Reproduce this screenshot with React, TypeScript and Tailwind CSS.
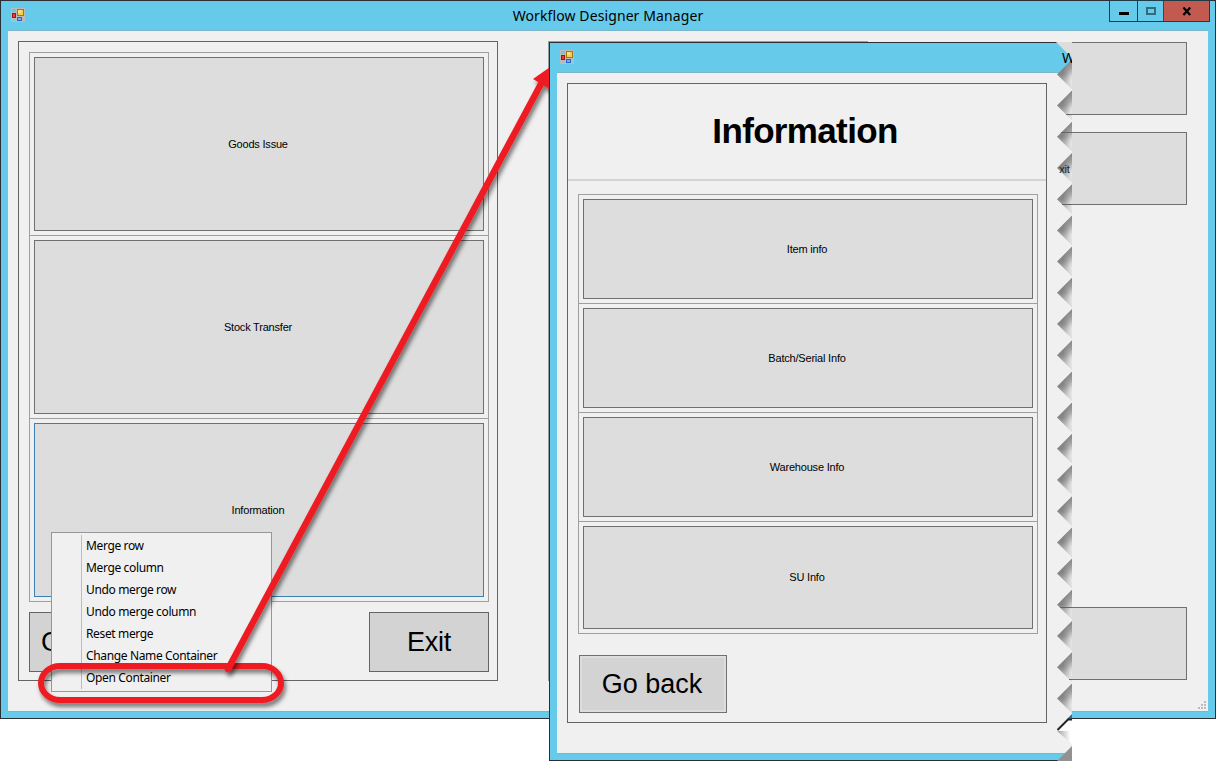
import React from "react";

const SANS = "font-['Noto_Sans','Open_Sans',sans-serif]";
const ARIAL = "font-['Liberation_Sans',Arial,sans-serif]";
const PITCH = 31.2;

function FormIcon() {
  return (
    <svg width="14" height="14" viewBox="0 0 14 14" shapeRendering="crispEdges">
      <rect width="14" height="14" fill="#bcbcbc" />
      <rect x="1" y="1" width="4" height="3" fill="#6cc4e6" />
      <rect x="1" y="11" width="1" height="2" fill="#8cc8e0" />
      <rect x="3" y="11" width="2" height="2" fill="#8cc8e0" />
      <rect x="12" y="9" width="1" height="4" fill="#8cc8e0" />
      <rect x="1" y="5" width="4" height="5" fill="#a31312" />
      <rect x="2" y="6" width="2" height="3" fill="#d8493c" />
      <rect x="6" y="1" width="7" height="7" fill="#a9760c" />
      <rect x="7" y="2" width="5" height="5" fill="#f9cd48" />
      <rect x="7" y="2" width="3" height="3" fill="#fde07c" />
      <rect x="6" y="9" width="5" height="4" fill="#2c62c4" />
      <rect x="7" y="10" width="3" height="2" fill="#7fa9ee" />
    </svg>
  );
}

function Tile({ label, className }: { label: string; className: string }) {
  return (
    <div className={`border-[#9f9f9f] p-1 ${className}`}>
      <div className={`flex h-full items-center justify-center border bg-[#dddddd] pr-[2px] ${label === "Information" ? "border-[#3c7fb1]" : "border-[#707070]"}`}>
        <span className={`${ARIAL} text-[11px] tracking-[-0.2px]`}>{label}</span>
      </div>
    </div>
  );
}

const menuItems = ["Merge row", "Merge column", "Undo merge row", "Undo merge column", "Reset merge", "Change Name Container", "Open Container"];

function ContextMenu() {
  return (
    <div className="absolute left-[51px] top-[532px] flex h-[160px] w-[221px] border border-[#979797] bg-[#f0f0f0] py-[2px]">
      <div className="w-[30px] border-r border-[#bdbdbd]" />
      <ul className={`${SANS} flex-1 pl-1 text-[12px] tracking-[-0.36px]`}>
        {menuItems.map((item) => (
          <li key={item} className="h-[22px] whitespace-nowrap leading-[22px]">{item}</li>
        ))}
      </ul>
    </div>
  );
}

function MainWindow() {
  return (
    <div className="flex h-[719px] w-[1216px] flex-col border border-[#2b2f33] bg-[#66caea] px-[7px] pb-[6px]">
      <header className="relative flex h-[29px] shrink-0 items-start justify-center">
        <div className="absolute left-[3px] top-[7px]"><FormIcon /></div>
        <h1 className={`${SANS} text-[14px] leading-[29px] tracking-[0.1px]`}>Workflow Designer Manager</h1>
        <div className="absolute -right-[2px] -top-px flex h-[22px] border border-[#1f3c46]">
          <div className="flex w-[28px] justify-center border-r border-[#1f3c46]"><div className="mt-[11px] h-[3px] w-[10px] bg-black" /></div>
          <div className="flex w-[25px] justify-center"><div className="mt-[6px] h-[8px] w-[10px] border-2 border-[#356b7c]" /></div>
          <div className="flex w-[46px] justify-center border-l border-[#6b3431] bg-[#c35a50]">
            <svg className="mt-[6px]" width="10" height="9" viewBox="0 0 10 9"><path d="M1.4 .5 8.2 8M8.2 .5 1.4 8" stroke="#000" strokeWidth="2.2" /></svg>
          </div>
        </div>
      </header>
      <main className="relative flex flex-1 justify-between border-y border-[#7fb4c8] bg-[#f0f0f0] pb-[30px] pl-[10px] pr-[21px] pt-[10px]">
        <section className="flex w-[480px] flex-col border border-[#646464] pb-2 pl-[10px] pr-[8px] pt-[10px]">
          <div className="flex flex-col">
            <Tile label="Goods Issue" className="h-[183px] border-x border-t" />
            <Tile label="Stock Transfer" className="h-[183px] border-x border-t" />
            <Tile label="Information" className="h-[184px] border" />
          </div>
          <div className={`${ARIAL} mt-[10px] flex h-[60px] justify-between text-[27px] tracking-[-0.3px]`}>
            <div className="flex w-[148px] items-center border border-[#646464] bg-[#d3d3d3] pl-[11px]">Go back</div>
            <div className="flex w-[120px] items-center justify-center border border-[#646464] bg-[#d3d3d3]">Exit</div>
          </div>
        </section>
        <section className="flex w-[639px] flex-col border-l border-[#9a9a9a] pb-px">
          <div className="h-px w-[319px] bg-[#9f9f9f]" />
          <div className="h-[73px] border border-[#707070] bg-[#dddddd]" />
          <div className="mt-[17px] h-[73px] border border-[#707070] bg-[#dddddd]" />
          <div className="mt-auto h-[73px] border border-[#707070] bg-[#dddddd]" />
        </section>
        <svg className="absolute bottom-[2px] right-[2px]" width="8" height="8" shapeRendering="crispEdges">
          {[[6, 0], [3, 3], [6, 3], [0, 6], [3, 6], [6, 6]].map(([x, y]) => <rect key={`${x}-${y}`} x={x} y={y} width="2" height="2" fill="#bcbcbc" />)}
        </svg>
      </main>
    </div>
  );
}

function InfoWindow() {
  return (
    <div className="absolute left-[549px] top-[42px] h-[719px] w-[523px] overflow-hidden">
      <div className="flex h-[719px] w-[640px] flex-col border border-[#2b2f33] bg-[#66caea] px-[7px] pb-[6px]">
        <header className="h-[29px] shrink-0 pl-[3px] pt-[7px]"><FormIcon /></header>
        <main className="flex-1 border-y border-[#7fb4c8] bg-[#f0f0f0] pl-[10px] pt-[10px]">
          <section className="flex h-[640px] w-[480px] flex-col border border-[#646464]">
            <h2 className={`${ARIAL} flex h-[97px] shrink-0 items-center justify-center border-b-2 border-[#d3d3d3] pr-[4px] text-[35px] font-bold tracking-[-0.65px]`}>Information</h2>
            <div className="ml-[10px] mr-[8px] mt-[13px] flex flex-col">
              <Tile label="Item info" className="h-[109px] border-x border-t" />
              <Tile label="Batch/Serial Info" className="h-[109px] border-x border-t" />
              <Tile label="Warehouse Info" className="h-[109px] border-x border-t" />
              <Tile label="SU Info" className="h-[113px] border" />
            </div>
            <div className={`${ARIAL} ml-[11px] mt-[21px] flex h-[58px] w-[148px] items-center justify-center border border-[#707070] bg-[#d3d3d3] pr-[2px] text-[27px] shadow-[inset_0_0_0_2px_#dddddd]`}>Go back</div>
          </section>
        </main>
      </div>
    </div>
  );
}

function TornEdge() {
  return (
    <svg className="absolute left-[1052px] top-[42px]" width="20" height="719" viewBox="1052 42 20 719">
      <defs>
        <radialGradient id="fold" cx="1.05" cy="0.74" r="0.72">
          <stop offset="0.1" stopColor="#ececec" />
          <stop offset="0.35" stopColor="#cccccc" />
          <stop offset="0.65" stopColor="#a0a0a0" />
          <stop offset="1" stopColor="#858585" />
        </radialGradient>
        <linearGradient id="lower" x1="0" y1="0" x2="0" y2="1">
          <stop offset="0.5" stopColor="#dddddd" stopOpacity="0" />
          <stop offset="1" stopColor="#e4e4e4" stopOpacity="0.9" />
        </linearGradient>
        <linearGradient id="last" x1="0" y1="0" x2="1" y2="0">
          <stop offset="0.1" stopColor="#aaaaaa" />
          <stop offset="0.9" stopColor="#ffffff" />
        </linearGradient>
      </defs>
      <path d="M1056 42H1072V58Z" fill="#dddddd" />
      {Array.from({ length: 21 }, (_, k) => {
        const y = 74.4 + k * PITCH;
        const d = `M1057 ${y}L1072 ${y - 15}V${y + 14.5}Z`;
        return (
          <g key={k}>
            <path d={d} fill="url(#fold)" />
            <path d={d} fill="url(#lower)" />
          </g>
        );
      })}
      <path d="M1066 114.5H1072M1061 132.5H1072M1062 204.5H1072M1060 607.5H1072M1069 679.5H1072" stroke="#666" />
      <path d="M1057 730.5 1068 719H1072V731Z" fill="#fff" />
      <path d="M1057 731H1072V744Z" fill="url(#last)" />
      <path d="M1072 714 1067 719H1072Z" fill="#356b7c" />
      <path d="M1057.5 730 1068 719.5H1072" stroke="#222" strokeWidth="2" fill="none" />
      <path d="M1057 761 1072 746V761Z" fill="#929292" />
    </svg>
  );
}

export default function App() {
  return (
    <div className="relative h-[761px] w-[1216px] overflow-hidden bg-white text-black">
      <MainWindow />
      <ContextMenu />
      <svg className="absolute left-0 top-0" width="549" height="761">
        <defs>
          <filter id="shadow" x="-20%" y="-20%" width="140%" height="150%">
            <feDropShadow dx="2" dy="4" stdDeviation="2" floodColor="#000" floodOpacity="0.5" />
          </filter>
        </defs>
        <g filter="url(#shadow)">
          <rect x="41" y="666" width="240" height="34" rx="19" fill="none" stroke="#ee1c23" strokeWidth="6" />
        </g>
        <g filter="url(#shadow)">
          <path d="M228 669 542 82" stroke="#ee1c23" strokeWidth="6.5" strokeLinecap="round" />
          <path d="M533 79 553 65 551 90Z" fill="#ee1c23" />
        </g>
      </svg>
      <InfoWindow />
      <TornEdge />
      <div className={`${SANS} absolute left-[1062px] top-[48px] w-[10px] overflow-hidden text-[14px] leading-[20px]`}>W</div>
      <div className={`${ARIAL} absolute left-[1059px] top-[161px] w-[11px] overflow-hidden text-[11px] leading-[16px] tracking-[-0.2px] text-[#222]`}><span className="-ml-[7px]">Exit</span></div>
    </div>
  );
}
